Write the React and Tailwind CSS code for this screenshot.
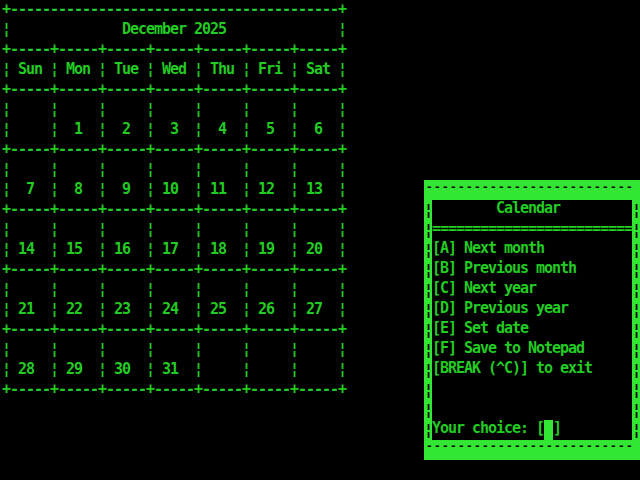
import React from "react";

const days = ["Sun", "Mon", "Tue", "Wed", "Thu", "Fri", "Sat"];
const weeks = [
  [null, 1, 2, 3, 4, 5, 6],
  [7, 8, 9, 10, 11, 12, 13],
  [14, 15, 16, 17, 18, 19, 20],
  [21, 22, 23, 24, 25, 26, 27],
  [28, 29, 30, 31, null, null, null],
];

const menu = [
  "[A] Next month",
  "[B] Previous month",
  "[C] Next year",
  "[D] Previous year",
  "[E] Set date",
  "[F] Save to Notepad",
  "[BREAK (^C)] to exit",
];

const face = "font-['DejaVu_Sans_Mono',monospace] font-bold whitespace-pre";
const mono = `${face} text-[15px] tracking-[-1.03px] leading-[20px]`;
// smaller hyphens for the window's top/bottom bars, still on the 8px cell grid
const bar = `${face} text-[11px] tracking-[1.38px] h-[20px] overflow-hidden text-black`;
const row = "h-[20px] leading-[17px]";

const calendarLines = () => {
  const sep = "+" + "-----+".repeat(7);
  const lines = [
    "+" + "-".repeat(41) + "+",
    "¦" + " ".repeat(14) + "December 2025" + " ".repeat(14) + "¦",
    sep,
    "¦" + days.map((d) => ` ${d} ¦`).join(""),
    sep,
  ];
  weeks.forEach((w) => {
    lines.push("¦" + "     ¦".repeat(7));
    lines.push("¦" + w.map((n) => ` ${n == null ? "  " : String(n).padStart(2, " ")}  ¦`).join(""));
    lines.push(sep);
  });
  return lines;
};

const Border = () => (
  <div className={`${mono} w-[8px] overflow-hidden text-black`}>
    {Array.from({ length: 12 }, (_, i) => (
      <div key={i}>¦</div>
    ))}
  </div>
);

export default function App() {
  return (
    <div className="w-[640px] h-[480px] bg-black flex items-start overflow-hidden">
      <pre className={`${mono} pl-[2px] -mt-[1px] text-[#22cc22]`}>
        {calendarLines().join("\n")}
      </pre>

      <div className="ml-auto mt-[180px] w-[216px] h-[280px] bg-[#33e633] flex flex-col">
        <div className={`${bar} leading-[14px] pl-[2px]`}>{"-".repeat(26)}</div>
        <div className="flex h-[240px]">
          <Border />
          <div className={`${mono} w-[200px] bg-black text-[#22cc22]`}>
            <div className={row}>{"        Calendar"}</div>
            <div className={row}>{"=".repeat(25)}</div>
            {menu.map((m) => (
              <div key={m} className={row}>
                {m}
              </div>
            ))}
            <div className={row}> </div>
            <div className={row}> </div>
            <div className={`${row} flex items-start`}>
              <span>Your choice: [</span>
              <span className="w-[9px] h-[20px] bg-[#33e633]" />
              <span>]</span>
            </div>
          </div>
          <Border />
        </div>
        <div className={`${bar} leading-[12px] pl-[2px]`}>{"-".repeat(26)}</div>
      </div>
    </div>
  );
}
